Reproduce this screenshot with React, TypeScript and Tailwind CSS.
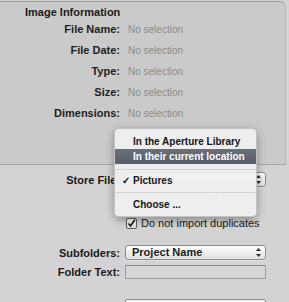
import React from "react";

function Arrows() {
  return (
    <svg width="5" height="9" viewBox="0 0 5 9" className="shrink-0">
      <path d="M2.5 0 L5 3 L0 3 Z" fill="#2a2a2a" />
      <path d="M0 6 L5 6 L2.5 9 Z" fill="#2a2a2a" />
    </svg>
  );
}

function Popup({
  text,
  className = "",
  textClass = "text-[11px] font-bold",
}: {
  text?: string;
  className?: string;
  textClass?: string;
}) {
  return (
    <div
      className={`flex h-[15px] min-w-0 items-center justify-between gap-[1px] rounded-[3px] border border-[#8c8c8c] bg-linear-to-b from-[#fdfdfd] to-[#e0e0e0] pr-[4px] shadow-[0_1px_0_rgba(255,255,255,0.35)] ${className}`}
    >
      <span className={`whitespace-nowrap leading-none text-[#1c1c1c] ${textClass}`}>{text}</span>
      <Arrows />
    </div>
  );
}

const info = ["File Name:", "File Date:", "Type:", "Size:", "Dimensions:"];

export default function App() {
  return (
    <div className="relative h-[302px] w-[289px] overflow-hidden bg-[#d3d3d3] font-['Liberation_Sans',Arial,sans-serif]">
      {/* image information group */}
      <div className="mt-[1px] h-[164px] w-[286px] rounded-tr-[6px] border-t border-r border-b border-t-[#9c9c9c] border-r-[#b4b4b4] border-b-[#a6a6a6] bg-[#cacaca]">
        <div className="pl-[25px] pt-[3px] text-[11px] font-bold leading-[14px] text-[#1a1a1a]">
          Image Information
        </div>
        <div className="grid grid-cols-[120px_1fr] gap-x-[8px]">
          {info.map((label) => (
            <React.Fragment key={label}>
              <div className="flex h-[21px] items-center justify-end text-[11px] font-bold text-[#1e1e1e]">
                {label}
              </div>
              <div className="flex h-[21px] items-center text-[10px] text-[#8a8a8a]">No selection</div>
            </React.Fragment>
          ))}
        </div>
      </div>

      {/* import options */}
      <div className="grid w-[266px] grid-cols-[120px_1fr] items-center gap-x-[5px] text-[11px] leading-[14px] text-[#1a1a1a]">
        <div className="mt-[7px] text-right font-bold">Store File:</div>
        <Popup className="mt-[7px] pl-[6px]" />

        <div />
        <Popup
          text="Copy Items"
          className="mt-[3px] ml-[68px] w-[62px] justify-self-start pl-[4px] opacity-40"
          textClass="text-[9px]"
        />

        <div />
        <div className="mt-[12px] flex h-[12px] items-center gap-[4px]">
          <div className="ml-[1px] flex h-[11px] w-[11px] items-center justify-center rounded-[2px] border border-[#5e5e5e] bg-linear-to-b from-white to-[#dcdcdc]">
            <svg width="9" height="9" viewBox="0 0 9 9">
              <path d="M1.5 4.5 L3.6 7 L7.8 0.8" fill="none" stroke="#111" strokeWidth="1.6" />
            </svg>
          </div>
          <span className="whitespace-nowrap leading-none">Do not import duplicates</span>
        </div>

        <div className="mt-[16px] text-right font-bold">Subfolders:</div>
        <Popup text="Project Name" className="mt-[16px] pl-[6px]" />

        <div className="mt-[5px] text-right font-bold">Folder Text:</div>
        <div className="mt-[5px] h-[14px] border border-[#9d9d9d] border-t-[#8a8a8a] bg-[#d6d6d6]" />

        <div />
        <div className="mt-[20px] h-[14px] rounded-[2px] border border-[#8a8a8a] bg-[#f4f4f4]" />
      </div>

      {/* open pop-up menu */}
      <div className="absolute left-[114px] top-[128px] w-[143px] rounded-[5px] border border-[#b0b0b0]/70 bg-[#efefef]/[0.95] py-[4px] text-[10px] font-bold text-[#151515] shadow-[0_3px_8px_rgba(0,0,0,0.35)]">
        <div className="flex h-[16px] items-center pl-[18px]">In the Aperture Library</div>
        <div className="flex h-[15px] items-center bg-linear-to-b from-[#69707b] to-[#575e69] pl-[18px] text-white">
          In their current location
        </div>
        <div className="pt-[5px] pb-[3px]">
          <div className="h-px bg-[#d2d2d2]" />
        </div>
        <div className="flex h-[15px] items-center">
          <span className="w-[18px] pl-[7px] text-[10px]">✓</span>
          Pictures
        </div>
        <div className="pt-[4px] pb-[3px]">
          <div className="h-px bg-[#d2d2d2]" />
        </div>
        <div className="flex h-[16px] items-center pl-[18px]">Choose ...</div>
      </div>
    </div>
  );
}
